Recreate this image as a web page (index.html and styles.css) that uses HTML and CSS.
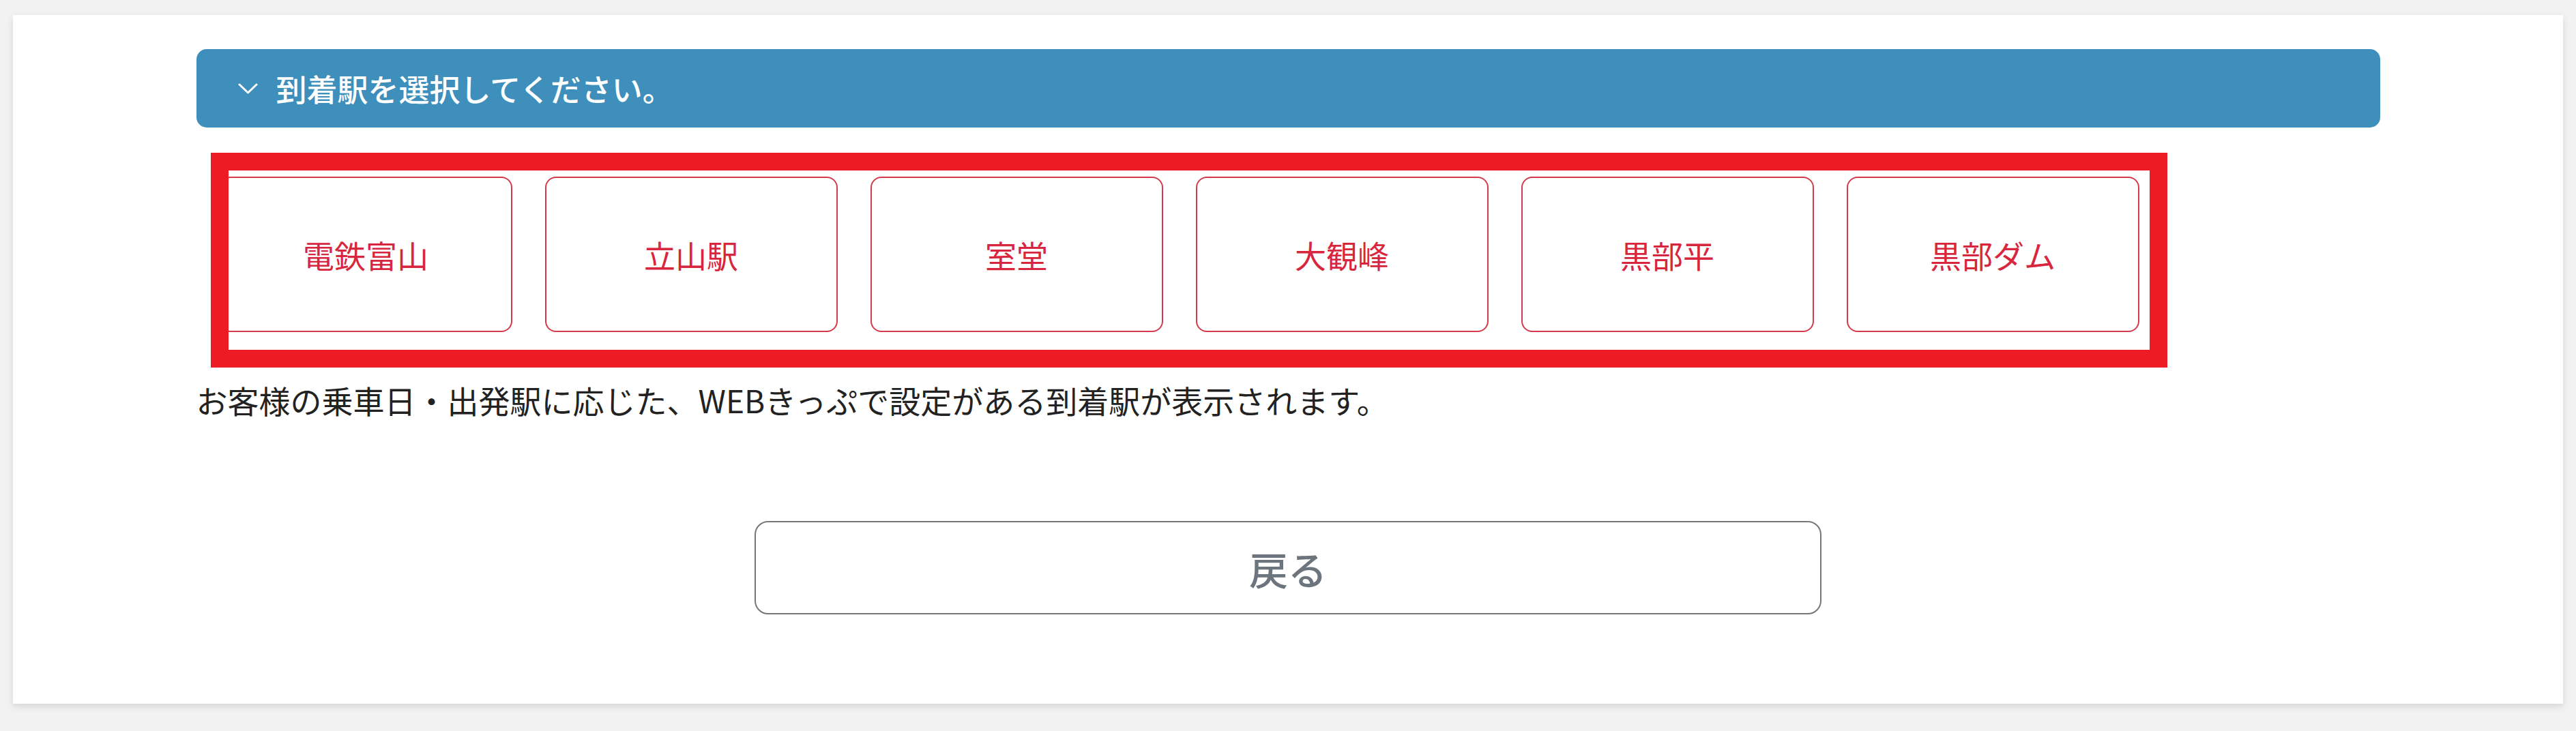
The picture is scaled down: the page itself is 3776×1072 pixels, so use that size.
FILE: index.html
```html
<!DOCTYPE html>
<html lang="ja">
<head>
    <meta charset="UTF-8">
    <meta name="viewport" content="width=device-width, initial-scale=1.0">
    <title>到着駅の選択</title>
    <link rel="stylesheet" href="styles.css">
</head>
<body>
    <div class="page">
        <main class="container">
            <div class="section-head">
                <svg class="chevron" width="29" height="16" viewBox="0 0 29 16" aria-hidden="true">
                    <polyline points="2,2 14.5,14 27,2" fill="none" stroke="#fff" stroke-width="3" stroke-linecap="round" stroke-linejoin="round"/>
                </svg>
                <span>到着駅を選択してください。</span>
            </div>

            <div class="stations">
                <a href="#" class="station">電鉄富山</a>
                <a href="#" class="station">立山駅</a>
                <a href="#" class="station">室堂</a>
                <a href="#" class="station">大観峰</a>
                <a href="#" class="station">黒部平</a>
                <a href="#" class="station">黒部ダム</a>
                <div class="highlight"></div>
            </div>

            <p class="note">お客様の乗車日・出発駅に応じた、WEBきっぷで設定がある到着駅が表示されます。</p>

            <div class="actions">
                <button class="back-button" type="button">戻る</button>
            </div>
        </main>
    </div>
</body>
</html>
```

FILE: styles.css
```css
body {
    margin: 0;
    padding: 0;
    background-color: #f2f2f2;
    font-family: "Noto Sans CJK JP", "Noto Sans", sans-serif;
    color: #222;
}
.page {
    background-color: #fff;
    margin: 22px 19px 40px;
    padding: 50px 0 131px;
    box-shadow: 0 4px 10px rgba(0, 0, 0, 0.12);
}
.container {
    width: 3201px;
    margin: 0 auto;
}
.section-head {
    display: flex;
    align-items: center;
    gap: 27px;
    height: 115px;
    padding-left: 61px;
    background-color: #3e8fbb;
    border-radius: 15px;
    color: #fff;
    font-size: 45px;
    font-weight: 500;
}
.chevron {
    flex-shrink: 0;
}
.stations {
    position: relative;
    display: flex;
    gap: 48px;
    margin-top: 72px;
    padding-left: 34px;
}
.station {
    box-sizing: border-box;
    width: 429px;
    height: 228px;
    display: flex;
    align-items: center;
    justify-content: center;
    border: 2px solid #d43a4c;
    border-radius: 16px;
    color: #d7263d;
    font-size: 46px;
    text-decoration: none;
    background: #fff;
}
.highlight {
    position: absolute;
    left: 21px;
    top: -35px;
    width: 2868px;
    height: 315px;
    box-sizing: border-box;
    border: 26px solid #ed1c24;
    pointer-events: none;
}
.note {
    margin: 65px 0 0;
    font-size: 46px;
    line-height: 69px;
    color: #222;
}
.actions {
    display: flex;
    justify-content: center;
    margin-top: 143px;
}
.back-button {
    width: 1564px;
    height: 137px;
    background: #fff;
    border: 2px solid #777;
    border-radius: 20px;
    color: #6c757d;
    font-family: inherit;
    font-size: 57px;
    font-weight: 500;
    cursor: pointer;
}
```
